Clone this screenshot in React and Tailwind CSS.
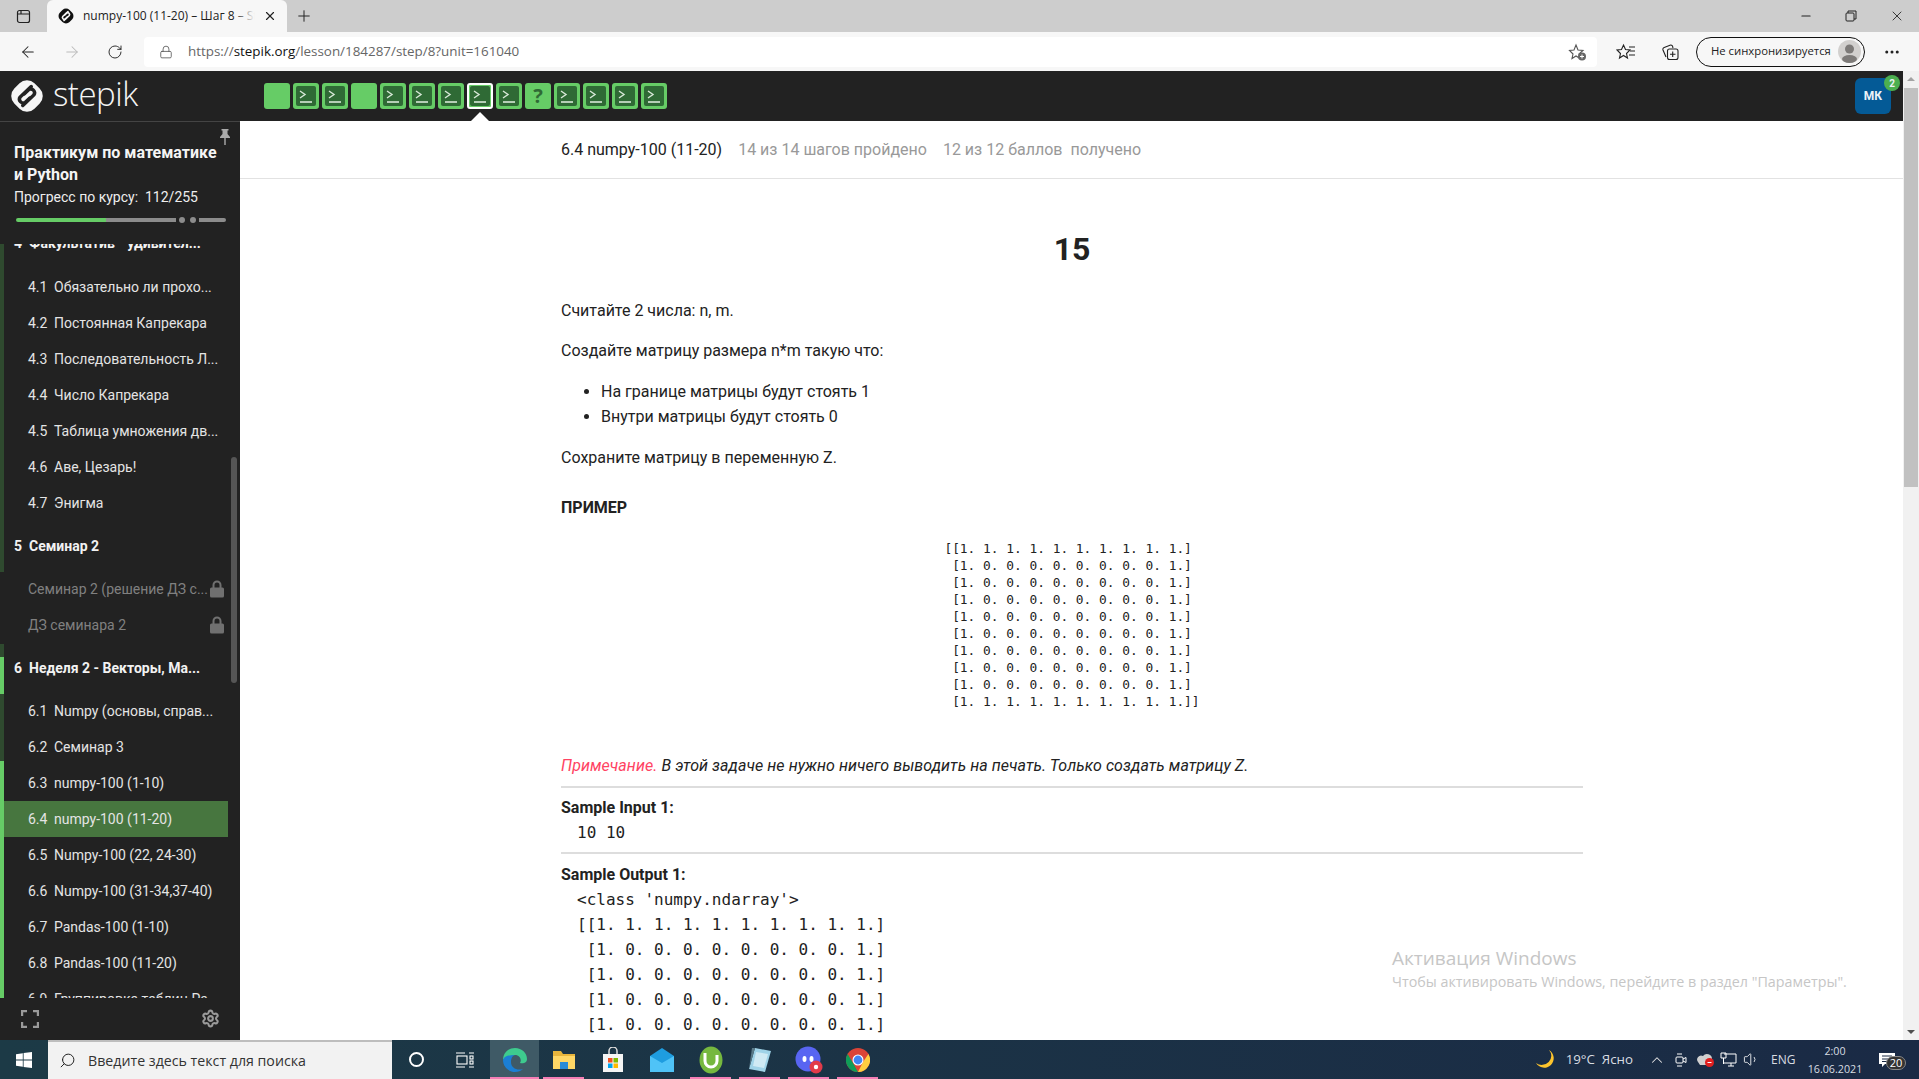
import React from "react";
import { ArrowLeft, ArrowRight, RotateCw, Lock, Plus, X, Minus, Search, Settings, ChevronUp, MoreHorizontal, Volume1 } from "lucide-react";

const SQUARES = ["e", "t", "t", "e", "t", "t", "t", "a", "t", "q", "t", "t", "t", "t"];

const MATRIX_SMALL = [
  "[[1. 1. 1. 1. 1. 1. 1. 1. 1. 1.]",
  " [1. 0. 0. 0. 0. 0. 0. 0. 0. 1.]",
  " [1. 0. 0. 0. 0. 0. 0. 0. 0. 1.]",
  " [1. 0. 0. 0. 0. 0. 0. 0. 0. 1.]",
  " [1. 0. 0. 0. 0. 0. 0. 0. 0. 1.]",
  " [1. 0. 0. 0. 0. 0. 0. 0. 0. 1.]",
  " [1. 0. 0. 0. 0. 0. 0. 0. 0. 1.]",
  " [1. 0. 0. 0. 0. 0. 0. 0. 0. 1.]",
  " [1. 0. 0. 0. 0. 0. 0. 0. 0. 1.]",
  " [1. 1. 1. 1. 1. 1. 1. 1. 1. 1.]]",
];

const SECTION_4 = [
  ["4.1", "Обязательно ли прохо..."],
  ["4.2", "Постоянная Капрекара"],
  ["4.3", "Последовательность Л..."],
  ["4.4", "Число Капрекара"],
  ["4.5", "Таблица умножения дв..."],
  ["4.6", "Аве, Цезарь!"],
  ["4.7", "Энигма"],
];

const SECTION_6 = [
  ["6.1", "Numpy (основы, справ..."],
  ["6.2", "Семинар 3"],
  ["6.3", "numpy-100 (1-10)"],
  ["6.4", "numpy-100 (11-20)"],
  ["6.5", "Numpy-100 (22, 24-30)"],
  ["6.6", "Numpy-100 (31-34,37-40)"],
  ["6.7", "Pandas-100 (1-10)"],
  ["6.8", "Pandas-100 (11-20)"],
  ["6.9", "Группировка таблиц Ра"],
];

const StepikLogo = ({ size, fill, line }) => (
  <svg width={size} height={size} viewBox="0 0 36 36">
    <rect x="4.5" y="4.5" width="27" height="27" rx="10" fill={fill} transform="rotate(-45 18 18)" />
    <path d="M22 9 L11.5 19 a3.6 3.6 0 0 0 5 5 L20.5 20" fill="none" stroke={line} strokeWidth="3.3" strokeLinecap="round" />
    <path d="M14 27 L24.5 17 a3.6 3.6 0 0 0 -5 -5 L15.5 16" fill="none" stroke={line} strokeWidth="3.3" strokeLinecap="round" />
  </svg>
);

const StepSquare = ({ kind }) => {
  const active = kind === "a";
  return (
    <div className={`relative w-[26px] h-[26px] rounded-[3px] bg-[#66cc66] flex items-center justify-center ${active ? "border-2 border-white" : ""}`}>
      {(kind === "t" || kind === "a") && (
        <svg width="20" height="20" viewBox="0 0 20 20">
          <rect width="20" height="20" rx="2" fill="#2f6a35" />
          <path d="M4 5 L9 8.5 L4 12" fill="none" stroke="#d8e8d8" strokeWidth="1.4" />
          <path d="M4 16 H16" stroke="#d8e8d8" strokeWidth="1.6" />
        </svg>
      )}
      {kind === "q" && <span className="text-[20px] font-bold text-[#2f6a35] leading-none">?</span>}
      {active && (
        <div className="absolute left-[2px] top-[27px] w-0 h-0 border-l-[9px] border-r-[9px] border-b-[9px] border-l-transparent border-r-transparent border-b-white" />
      )}
    </div>
  );
};

const LessonRow = ({ num, title, active, locked }) => (
  <div className={`h-[36px] w-[224px] flex items-center pl-[24px] text-[14px] whitespace-nowrap ${active ? "bg-[#47763f]" : ""} ${locked ? "text-[#808080]" : "text-[#e4e4e4]"}`}>
    {num && <span className="w-[26px] shrink-0">{num}</span>}
    <span>{title}</span>
    {locked && (
      <svg className="absolute left-[210px]" width="14" height="18" viewBox="0 0 14 18">
        <path d="M3.5 8 V5 a3.5 3.5 0 0 1 7 0 V8" fill="none" stroke="#707070" strokeWidth="2" />
        <rect y="7.5" width="14" height="10" rx="1.5" fill="#707070" />
      </svg>
    )}
  </div>
);

const SectionRow = ({ num, title, className }) => (
  <div className={`flex items-center pl-[10px] text-[14px] font-bold text-[#f2f2f2] whitespace-nowrap ${className}`}>
    <span className="w-[15px] shrink-0">{num}</span>
    <span>{title}</span>
  </div>
);

const Sidebar = () => (
  <aside className="w-[240px] shrink-0 h-full bg-[#222222] flex flex-col border-t border-[#444] font-['Roboto',sans-serif]">
    <div className="relative h-[122px] shrink-0 pl-[14px] pt-[20px]">
      <svg className="absolute left-[220px] top-[7px]" width="10" height="16" viewBox="0 0 10 16" fill="#aaa">
        <path d="M1.5 0 H8.5 V1.5 H7.5 V5 L10 8 V9 H5.7 V16 H4.3 V9 H0 V8 L2.5 5 V1.5 H1.5 Z" />
      </svg>
      <div className="text-[16px] leading-[22px] font-bold text-[#f5f5f5]">Практикум по математике<br />и Python</div>
      <div className="text-[14px] leading-[22px] text-[#eee]">Прогресс по курсу:&nbsp; 112/255</div>
      <div className="flex items-center mt-[10px] ml-[2px] h-[4px]">
        <div className="w-[90px] h-[4px] rounded-l-full bg-[#66cc66]" />
        <div className="w-[70px] h-[4px] bg-[#8c8c8c]" />
        <div className="w-[6px] h-[6px] ml-[3px] rounded-full bg-[#8c8c8c]" />
        <div className="w-[6px] h-[6px] ml-[5px] rounded-full bg-[#8c8c8c]" />
        <div className="w-[27px] h-[4px] ml-[3px] rounded-r-full bg-[#8c8c8c]" />
      </div>
    </div>
    <div className="relative flex-1 flex overflow-hidden">
      <div className="w-[4px] shrink-0 flex flex-col">
        <div className="h-[328px] shrink-0 bg-[#2f4a2f]" />
        <div className="h-[72px] shrink-0" />
        <div className="h-[13px] shrink-0 bg-[#2f4a2f]" />
        <div className="h-[37px] shrink-0 bg-[#66cc66]" />
        <div className="h-[67px] shrink-0 bg-[#2f4a2f]" />
        <div className="h-[237px] shrink-0 bg-[#66cc66]" />
      </div>
      <div className="flex-1 -ml-[4px] pl-[4px]">
        <SectionRow num="4" title="Факультатив - удивител..." className="h-[50px] -mt-[26px]" />
        <div className="h-[1px]" />
        {SECTION_4.map(([n, t]) => <LessonRow key={n} num={n} title={t} />)}
        <SectionRow num="5" title="Семинар 2" className="h-[50px]" />
        <LessonRow title="Семинар 2 (решение ДЗ с..." locked />
        <LessonRow title="ДЗ семинара 2" locked />
        <SectionRow num="6" title="Неделя 2 - Векторы, Ма..." className="h-[50px]" />
        {SECTION_6.map(([n, t]) => <LessonRow key={n} num={n} title={t} active={n === "6.4"} />)}
      </div>
      <div className="absolute left-[231px] top-[213px] w-[6px] h-[226px] rounded-full bg-[#555]" />
    </div>
    <div className="h-[42px] shrink-0 bg-[#222222] flex items-center justify-between pl-[21px] pr-[20px] pb-[1px] z-10">
      <svg width="18" height="18" viewBox="0 0 18 18" fill="none" stroke="#9a9a9a" strokeWidth="2.4">
        <path d="M1 6 V1 H6 M12 1 H17 V6 M17 12 V17 H12 M6 17 H1 V12" />
      </svg>
      <Settings size={19} color="#9a9a9a" strokeWidth={2.6} />
    </div>
  </aside>
);

const TabBar = () => (
  <div className="h-[32px] shrink-0 bg-[#cdcdcd] flex items-end">
    <div className="w-[47px] h-full flex items-center justify-center">
      <svg width="15" height="15" viewBox="0 0 15 15" fill="none" stroke="#222" strokeWidth="1.2">
        <rect x="1.5" y="1.5" width="12" height="12" rx="2" />
        <path d="M1.5 5 H13.5 M5 1.5 V5" />
      </svg>
    </div>
    <div className="w-[240px] h-full bg-[#f7f7f7] rounded-t-[6px] flex items-center pl-[10px] text-[12px] text-[#222] font-['Open_Sans',sans-serif]">
      <StepikLogo size={18} fill="#111" line="#f7f7f7" />
      <div className="relative ml-[8px] w-[172px] overflow-hidden whitespace-nowrap">
        numpy-100 (11-20) – Шаг 8 – Stepik
        <div className="absolute right-0 top-0 bottom-0 w-[22px] bg-gradient-to-r from-transparent to-[#f7f7f7]" />
      </div>
      <X size={14} className="ml-[8px]" color="#222" />
    </div>
    <div className="w-[34px] h-full flex items-center justify-center"><Plus size={18} color="#222" strokeWidth={1.3} /></div>
    <div className="flex-1" />
    <div className="flex items-center h-full gap-[32px] pr-[14px]">
      <Minus size={14} color="#222" />
      <svg width="12" height="12" viewBox="0 0 12 12" fill="none" stroke="#222"><rect x="1" y="3" width="8" height="8" rx="1" /><path d="M3 3 V1 H11 V9 H9" /></svg>
      <X size={16} color="#222" strokeWidth={1.3} />
    </div>
  </div>
);

const AddressBar = () => (
  <div className="h-[39px] shrink-0 bg-[#f7f7f7] flex items-center">
    <div className="w-[144px] flex items-center pl-[19px] gap-[26px]">
      <ArrowLeft size={18} color="#222" strokeWidth={1.4} />
      <ArrowRight size={18} color="#bbb" strokeWidth={1.4} />
      <RotateCw size={16} color="#222" strokeWidth={1.4} />
    </div>
    <div className="w-[1453px] h-[30px] bg-white rounded-[4px] flex items-center pl-[15px] font-['Open_Sans',sans-serif] text-[13.4px] text-[#666]">
      <Lock size={14} color="#555" strokeWidth={1.4} />
      <span className="ml-[15px]">https://<span className="text-[#111]">stepik.org</span>/lesson/184287/step/8?unit=161040</span>
      <div className="flex-1" />
      <svg className="mr-[10px]" width="19" height="18" viewBox="0 0 19 18">
        <path d="M8 2 L10 7 L15 7.5 L11 11 L12 15.5 L8 13 L4 15.5 L5 11 L1.5 7.5 L6 7 Z" fill="none" stroke="#555" strokeWidth="1.1" />
        <circle cx="14" cy="13.5" r="4" fill="#666" />
        <path d="M12 13.5 H16 M14 11.5 V15.5" stroke="#fff" strokeWidth="1" />
      </svg>
    </div>
    <div className="w-[102px] flex items-center pl-[19px] gap-[25px]">
      <svg width="20" height="18" viewBox="0 0 20 18" fill="none" stroke="#222" strokeWidth="1.1">
        <path d="M7.5 2 L9.5 6.5 L14 7 L10.5 10.5 L11.5 15 L7.5 12.5 L3.5 15 L4.5 10.5 L1 7 L5.5 6.5 Z" />
        <path d="M13 4 H19 M14 8 H19 M13 12 H19" />
      </svg>
      <svg width="18" height="18" viewBox="0 0 18 18" fill="none" stroke="#222" strokeWidth="1.1">
        <path d="M5 14 L2 7 a2 2 0 0 1 1.2 -2.6 L9 2.2 a2 2 0 0 1 2.6 1.2 L12 5" />
        <rect x="6.5" y="6" width="10.5" height="10.5" rx="2" />
        <path d="M11.7 8.5 V14 M9 11.2 H14.5" />
      </svg>
    </div>
    <div className="w-[169px] h-[30px] rounded-full border border-[#111] flex items-center pl-[14px] pr-[3px] justify-between text-[11.3px] text-[#222] font-['Open_Sans',sans-serif] -ml-[3px]">
      <span className="whitespace-nowrap">Не синхронизируется</span>
      <svg width="23" height="23" viewBox="0 0 23 23">
        <circle cx="11.5" cy="11.5" r="11.5" fill="#d2d0ce" />
        <circle cx="11.5" cy="9" r="4.5" fill="#7d7a78" />
        <ellipse cx="11.5" cy="19" rx="7.5" ry="4" fill="#7d7a78" />
      </svg>
    </div>
    <div className="ml-[18px]"><MoreHorizontal size={18} color="#222" strokeWidth={2} /></div>
  </div>
);

const StepikHeader = () => (
  <div className="h-[50px] shrink-0 bg-[#222222] flex items-center relative">
    <div className="w-[264px] shrink-0 flex items-center pl-[8px]">
      <StepikLogo size={38} fill="#f5f5f5" line="#222222" />
      <span className="ml-[7px] text-[33px] leading-none -mt-[5px] font-light tracking-[-0.5px] text-[#f5f5f5] font-['Open_Sans',sans-serif]">stepik</span>
    </div>
    <div className="flex gap-[3px]">
      {SQUARES.map((k, i) => <StepSquare key={i} kind={k} />)}
    </div>
    <div className="flex-1" />
    <div className="relative w-[36px] h-[36px] mr-[12px] rounded-[6px] bg-[#045a96] flex items-center justify-center text-[12px] font-bold text-[#eaf2f8] font-['Roboto',sans-serif]">
      МК
      <div className="absolute -top-[3px] -right-[9px] w-[16px] h-[16px] rounded-full bg-[#4caf50] flex items-center justify-center text-[10px]">2</div>
    </div>
  </div>
);

const Lesson = () => (
  <div className="flex-1 min-w-0 h-full overflow-hidden bg-white font-['Roboto',sans-serif] text-[16px] leading-[24px] text-[#222]">
    <div className="h-[58px] border-b border-[#e2e2e2] pl-[321px] pt-[17px] flex whitespace-nowrap">
      <span>6.4 numpy-100 (11-20)</span>
      <span className="ml-[16px] text-[#999]">14 из 14 шагов пройдено</span>
      <span className="ml-[16px] text-[#999]">12 из 12 баллов&nbsp; получено</span>
    </div>
    <div className="w-[1022px] ml-[321px]">
      <h1 className="mt-[50px] text-center text-[32px] leading-[40px] font-bold">15</h1>
      <p className="mt-[30px]">Считайте 2 числа: n, m.</p>
      <p className="mt-[16px]">Создайте матрицу размера n*m такую что:</p>
      <ul className="mt-[17px] pl-[40px] list-disc">
        <li className="h-[25px]">На границе матрицы будут стоять 1</li>
        <li className="h-[25px]">Внутри матрицы будут стоять 0</li>
      </ul>
      <p className="mt-[16px]">Сохраните матрицу в переменную Z.</p>
      <p className="mt-[26px] font-bold">ПРИМЕР</p>
      <pre className="mt-[20px] w-fit mx-auto font-['DejaVu_Sans_Mono',monospace] text-[12.85px] leading-[17px] text-[#222]">{MATRIX_SMALL.join("\n")}</pre>
      <p className="mt-[44px] italic tracking-[0.07px]"><span className="text-[#ff4363]">Примечание.</span> В этой задаче не нужно ничего выводить на печать. Только создать матрицу Z.</p>
      <div className="mt-[8px] border-t-2 border-[#ddd]" />
      <p className="mt-[8px] font-bold">Sample Input 1:</p>
      <pre className="pl-[16px] font-['DejaVu_Sans_Mono',monospace] leading-[25px]">10 10</pre>
      <div className="mt-[7px] border-t-2 border-[#ddd]" />
      <p className="mt-[9px] font-bold">Sample Output 1:</p>
      <pre className="pl-[16px] font-['DejaVu_Sans_Mono',monospace] leading-[25px]">{"<class 'numpy.ndarray'>\n" + MATRIX_SMALL.slice(0, 5).join("\n")}</pre>
    </div>
  </div>
);

const PageScrollbar = () => (
  <div className="w-[16px] shrink-0 h-full bg-[#f1f1f1] flex flex-col items-center">
    <div className="h-[16px] flex items-center justify-center">
      <div className="w-0 h-0 border-l-[4px] border-r-[4px] border-b-[4px] border-l-transparent border-r-transparent border-b-[#a3a3a3]" />
    </div>
    <div className="w-[14px] h-[399px] mt-[1px] bg-[#c1c1c1]" />
    <div className="flex-1" />
    <div className="h-[16px] flex items-center justify-center">
      <div className="w-0 h-0 border-l-[4px] border-r-[4px] border-t-[4px] border-l-transparent border-r-transparent border-t-[#505050]" />
    </div>
  </div>
);

const TaskIcon = ({ children, active, running }) => (
  <div className={`relative w-[49px] h-full flex items-center justify-center ${active ? "bg-[#3f5a66]" : ""}`}>
    {children}
    {running && <div className={`absolute bottom-0 h-[2px] bg-[#f57eb6] ${active ? "left-0 right-0" : "left-[4px] right-[4px]"}`} />}
  </div>
);

const Taskbar = () => (
  <div className="h-[39px] shrink-0 flex items-center text-white bg-gradient-to-r from-[#1c3a46] to-[#1a2a45] font-['Open_Sans',sans-serif]">
    <div className="w-[48px] flex justify-center">
      <svg width="16" height="16" viewBox="0 0 16 16" fill="#fff"><path d="M0 2.2 L6.8 1.2 V7.5 H0 Z M7.6 1.1 L16 0 V7.5 H7.6 Z M0 8.4 H6.8 V14.8 L0 13.8 Z M7.6 8.4 H16 V16 L7.6 14.9 Z" /></svg>
    </div>
    <div className="w-[344px] h-full bg-[#f2f2f2] border-t-2 border-[#bdbdbd] flex items-center pl-[11px] text-[14.2px] text-[#333]">
      <Search size={17} color="#222" strokeWidth={1.4} className="-scale-x-100" />
      <span className="ml-[12px]">Введите здесь текст для поиска</span>
    </div>
    <div className="w-[48px] flex justify-center">
      <div className="w-[15px] h-[15px] rounded-full border-2 border-white" />
    </div>
    <div className="w-[50px] flex justify-center">
      <svg width="18" height="16" viewBox="0 0 18 16" fill="none" stroke="#fff" strokeWidth="1.1"><path d="M0 1 H9 M0 15 H9 M13 1 H18 M13 15 H18" /><rect x="1" y="4" width="10" height="8" /><rect x="14" y="4" width="3" height="3" /><rect x="14" y="9" width="3" height="3" /></svg>
    </div>
    <div className="flex h-full">
      <TaskIcon active running>
        <svg width="26" height="26" viewBox="0 0 26 26">
          <path d="M13 1 C20 1 25 6 25 12 C25 16 21 17 18 16 C20 13 18 8 13 8 C8 8 5 12 5 15 C5 10 1 12 1 13 C1 6 6 1 13 1 Z" fill="#3ecb8e" />
          <path d="M1 13 C1 20 7 25 13 25 C16 25 19 24 21 22 C15 24 9 21 9 15 C9 11 11 8 13 8 C7 8 2 9 1 13 Z" fill="#1b7fd4" />
        </svg>
      </TaskIcon>
      <TaskIcon running>
        <svg width="24" height="22" viewBox="0 0 24 22">
          <path d="M1 2 H9 L11 5 H23 V20 H1 Z" fill="#e8b53c" />
          <rect x="1" y="7" width="22" height="13" fill="#ffd766" />
          <rect x="8" y="13" width="8" height="7" fill="#2b8bd6" />
        </svg>
      </TaskIcon>
      <TaskIcon>
        <svg width="22" height="26" viewBox="0 0 22 26">
          <path d="M7 7 V4 a4 4 0 0 1 8 0 V7" fill="none" stroke="#ddd" strokeWidth="1.5" />
          <rect x="1" y="7" width="20" height="18" fill="#f5f5f5" />
          <rect x="6" y="11" width="4.5" height="4.5" fill="#f25022" />
          <rect x="11.5" y="11" width="4.5" height="4.5" fill="#7fba00" />
          <rect x="6" y="16.5" width="4.5" height="4.5" fill="#00a4ef" />
          <rect x="11.5" y="16.5" width="4.5" height="4.5" fill="#ffb900" />
        </svg>
      </TaskIcon>
      <TaskIcon>
        <svg width="26" height="24" viewBox="0 0 26 24">
          <path d="M1 8 L13 0 L25 8 V24 H1 Z" fill="#1e9de0" />
          <path d="M1 8 L13 15 L25 8 V24 H1 Z" fill="#4fc3f7" />
        </svg>
      </TaskIcon>
      <TaskIcon running>
        <svg width="24" height="28" viewBox="0 0 24 28">
          <ellipse cx="12" cy="14" rx="11.5" ry="13.5" fill="#76b83f" />
          <path d="M6 7 V15 a6 6 0 0 0 12 0 V9" fill="none" stroke="#fff" strokeWidth="3" />
        </svg>
      </TaskIcon>
      <TaskIcon running>
        <svg width="24" height="26" viewBox="0 0 24 26">
          <path d="M7 1 L23 4 L17 25 L1 22 Z" fill="#9fd3e8" />
          <path d="M7 1 L4 1 L1 22 Z" fill="#5a7a88" />
          <path d="M8 5 L20 7 L16 21 L5 19 Z" fill="#cfeaf4" />
        </svg>
      </TaskIcon>
      <TaskIcon running>
        <svg width="28" height="28" viewBox="0 0 28 28">
          <circle cx="13" cy="13" r="12.5" fill="#5865f2" />
          <ellipse cx="9.5" cy="13" rx="2" ry="3" fill="#fff" />
          <ellipse cx="16.5" cy="13" rx="2" ry="3" fill="#fff" />
          <circle cx="21" cy="21" r="6.5" fill="#e23b4a" />
          <circle cx="21" cy="21" r="2.2" fill="#fff" />
        </svg>
      </TaskIcon>
      <TaskIcon running>
        <svg width="24" height="26" viewBox="0 0 24 24">
          <circle cx="12" cy="12" r="12" fill="#db4437" />
          <path d="M12 24 A12 12 0 0 1 1.6 6 L7 15 Z" fill="#0f9d58" />
          <path d="M22.4 6 A12 12 0 0 1 12 24 L17 14 Z" fill="#ffcd40" />
          <circle cx="12" cy="12" r="5.5" fill="#fff" />
          <circle cx="12" cy="12" r="4.4" fill="#4285f4" />
        </svg>
      </TaskIcon>
    </div>
    <div className="flex-1" />
    <div className="flex items-center h-full text-[#d8dde2] text-[12px] font-['Open_Sans',sans-serif] pr-[13px]">
      <svg className="mr-[11px]" width="19" height="19" viewBox="0 0 19 19"><path d="M13 0 A9.5 9.5 0 1 1 0 13 A9.5 9 0 0 0 13 0 Z" fill="#fdc42d" /></svg>
      <span className="text-[13.3px] whitespace-nowrap">19°C&nbsp; Ясно</span>
      <ChevronUp size={18} color="#e5e5e5" strokeWidth={1.4} className="ml-[15px]" />
      <svg className="ml-[9px]" width="12" height="16" viewBox="0 0 12 16" fill="none" stroke="#fff"><rect x="1" y="5" width="7" height="6" rx="1" /><path d="M8 7 L11 5.5 V10.5 L8 9 M2 2 H7 M2 14 H7" /></svg>
      <svg className="ml-[10px]" width="18" height="14" viewBox="0 0 18 14"><path d="M1 9 a4 4 0 0 1 5 -6 a5 5 0 0 1 9 3 L12 12 H3 Z" fill="#d0d0d0" /><circle cx="12.5" cy="9.5" r="4.5" fill="#e02020" /><path d="M10.5 9.5 H14.5" stroke="#fff" /></svg>
      <svg className="ml-[5px]" width="17" height="16" viewBox="0 0 17 16" fill="none" stroke="#fff"><path d="M4 2 H16 V11 H4 M1 1 H6 V6 H1 Z M3.5 6 V12 M8 14 H14 M11 11 V14" /></svg>
      <Volume1 size={17} color="#fff" strokeWidth={1.2} className="ml-[6px]" />
      <span className="ml-[11px] text-[12px] w-[24px]">ENG</span>
      <div className="ml-[7px] w-[66px] text-center text-[10.7px] leading-[18px]">2:00<br />16.06.2021</div>
      <div className="relative w-[38px] h-full flex items-center justify-center">
        <svg width="16" height="14" viewBox="0 0 16 14"><path d="M0 0 H16 V11 H6 L3 14 V11 H0 Z" fill="#fff" /><path d="M3 3 H13 M3 6 H13 M3 8.5 H10" stroke="#1a2a45" /></svg>
        <span className="absolute left-[18px] top-[16px] w-[20px] h-[14px] rounded-full bg-[#333] border border-[#888] text-[11px] leading-[12px] text-center text-white">20</span>
      </div>
    </div>
  </div>
);

export default function App() {
  return (
    <div className="relative w-[1919px] h-[1079px] flex flex-col overflow-hidden">
      <TabBar />
      <AddressBar />
      <div className="flex-1 min-h-0 flex">
        <div className="flex-1 min-w-0 flex flex-col">
          <StepikHeader />
          <div className="flex-1 min-h-0 flex">
            <Sidebar />
            <Lesson />
          </div>
        </div>
        <PageScrollbar />
      </div>
      <Taskbar />
      <div className="absolute left-[1392px] top-[945px] text-[#c6c6c6] font-['Open_Sans',sans-serif] whitespace-nowrap pointer-events-none">
        <div className="text-[19px] leading-[27px]">Активация Windows</div>
        <div className="text-[14.3px] leading-[20px]">Чтобы активировать Windows, перейдите в раздел "Параметры".</div>
      </div>
    </div>
  );
}
